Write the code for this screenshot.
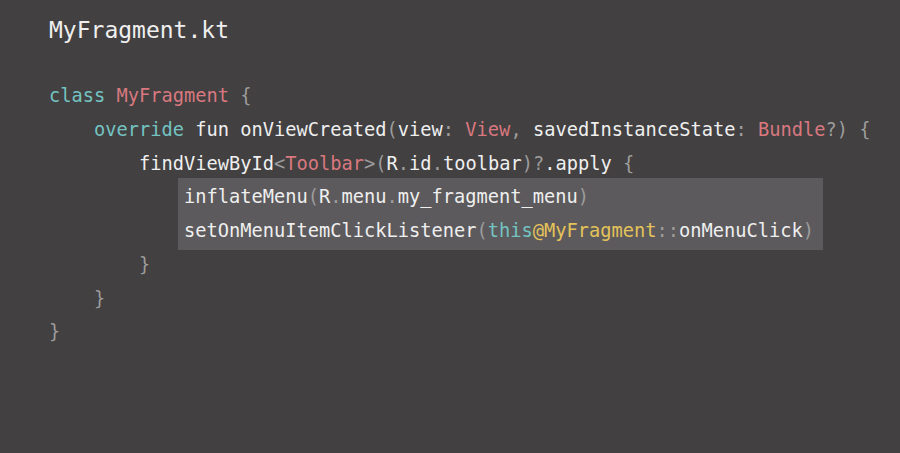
const K = ({ children }) => <span className="text-[#74c3c1]">{children}</span>;
const T = ({ children }) => <span className="text-[#d9787f]">{children}</span>;
const P = ({ children }) => <span className="text-[#9d9c9c]">{children}</span>;
const Y = ({ children }) => <span className="text-[#e4c35a]">{children}</span>;

function Line({ children }) {
  return <div className="h-[33.75px] leading-[33.75px] whitespace-pre">{children}</div>;
}

export default function App() {
  return (
    <div
      className="w-[900px] h-[453px] bg-[#424041] text-[#efefef] overflow-hidden"
      style={{ fontFamily: '"DejaVu Sans Mono", "Liberation Mono", monospace' }}
    >
      <div className="pl-[49px] pt-[15px]">
        <div className="text-[23px] leading-[30px] font-medium">MyFragment.kt</div>

        <div className="mt-[34px] text-[18.7px]">
          <Line>
            <K>class</K> <T>MyFragment</T> <P>{"{"}</P>
          </Line>
          <Line>
            {"    "}<K>override</K> fun onViewCreated<P>(</P>view<P>:</P> <T>View</T><P>,</P> savedInstanceState<P>:</P> <T>Bundle</T><P>?)</P> <P>{"{"}</P>
          </Line>
          <Line>
            {"        "}findViewById<P>{"<"}</P><T>Toolbar</T><P>{">("}</P>R<P>.</P>id<P>.</P>toolbar<P>)?</P>.apply <P>{"{"}</P>
          </Line>
          <div className="ml-[129px] w-[645px] -my-[2px] py-[2px] pl-[6px] bg-[#5c5a5c]">
            <Line>
              inflateMenu<P>(</P>R<P>.</P>menu<P>.</P>my_fragment_menu<P>)</P>
            </Line>
            <Line>
              setOnMenuItemClickListener<P>(</P><K>this</K><Y>@MyFragment</Y><P>::</P>onMenuClick<P>)</P>
            </Line>
          </div>
          <Line>
            {"        "}<P>{"}"}</P>
          </Line>
          <Line>
            {"    "}<P>{"}"}</P>
          </Line>
          <Line>
            <P>{"}"}</P>
          </Line>
        </div>
      </div>
    </div>
  );
}
